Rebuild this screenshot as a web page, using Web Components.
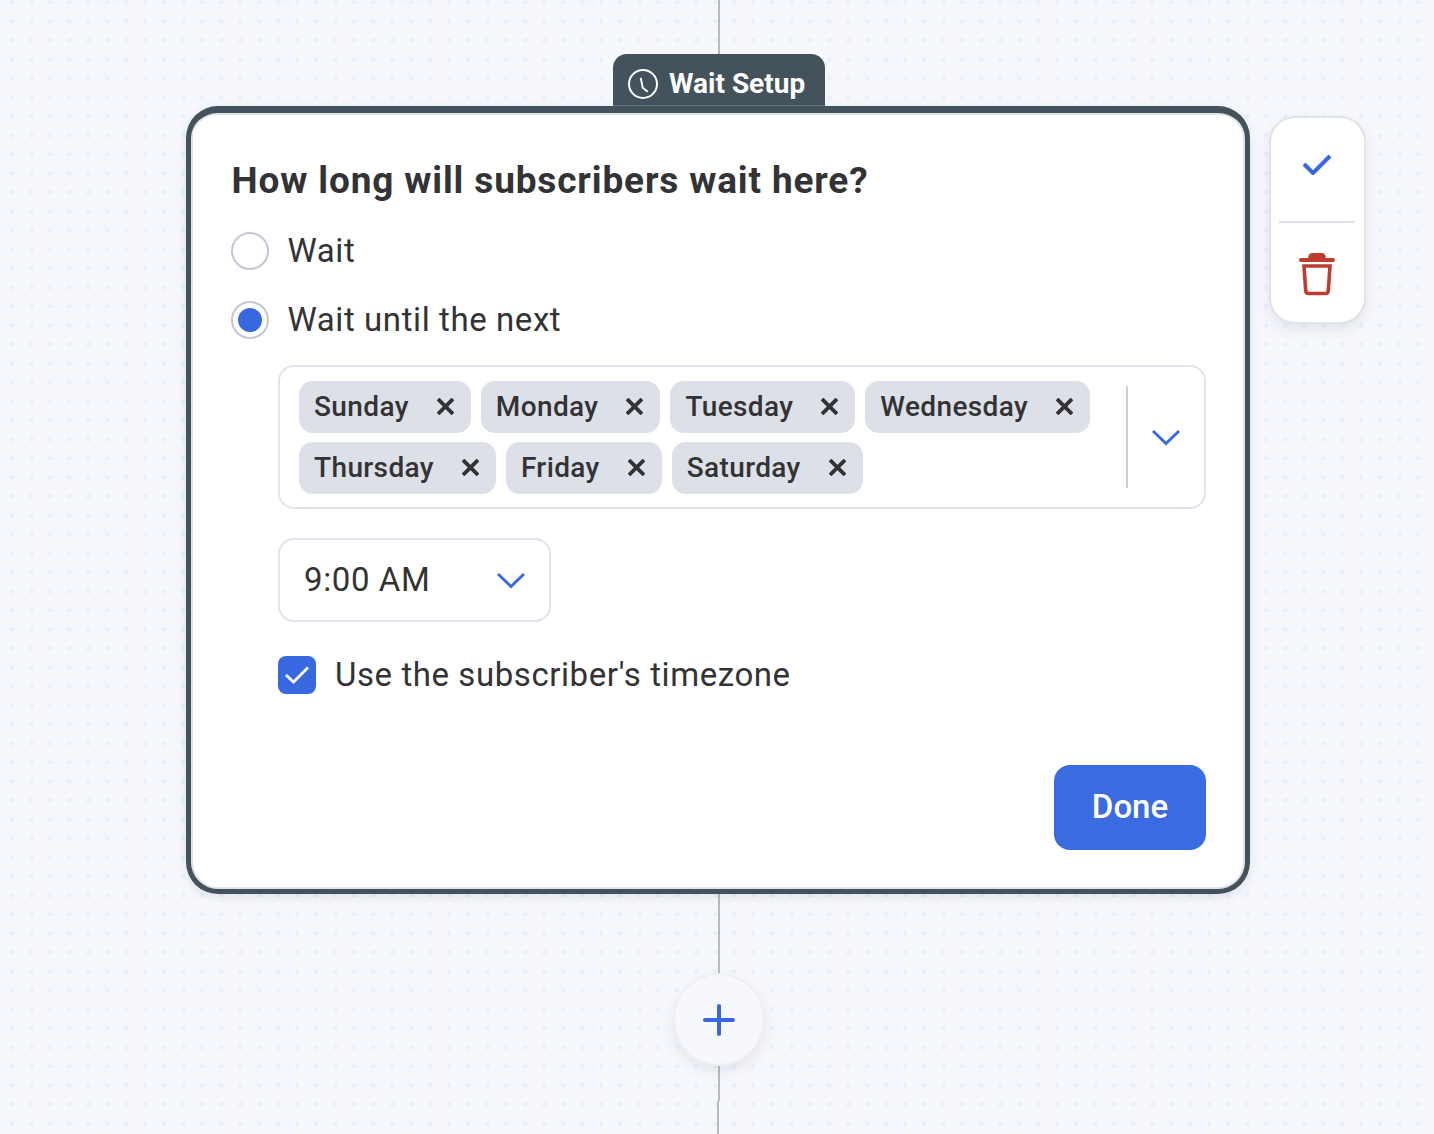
<!DOCTYPE html>
<html lang="en"><head><meta charset="utf-8"><title>Wait Setup</title>
<style>
html,body{margin:0;padding:0;background:#f7f8fd}
body{font-family:Roboto,"Liberation Sans",sans-serif;color:#333336}
</style></head><body>
<wf-canvas>
  <wf-line style="--h:54px"></wf-line>
  <wf-node title-text="Wait Setup">
    <h2 slot="heading">How long will subscribers wait here?</h2>
    <wf-radio>Wait</wf-radio>
    <wf-radio checked>Wait until the next</wf-radio>
    <wf-nested>
      <wf-multiselect>
        <wf-chip>Sunday</wf-chip><wf-chip>Monday</wf-chip><wf-chip>Tuesday</wf-chip><wf-chip>Wednesday</wf-chip>
        <wf-chip>Thursday</wf-chip><wf-chip>Friday</wf-chip><wf-chip>Saturday</wf-chip>
      </wf-multiselect>
      <wf-select>9:00 AM</wf-select>
      <wf-checkbox>Use the subscriber's timezone</wf-checkbox>
    </wf-nested>
    <wf-button slot="footer">Done</wf-button>
  </wf-node>
  <wf-line style="--h:79px"></wf-line>
  <wf-add></wf-add>
  <wf-line style="--h:35px"></wf-line>
  <wf-line style="--h:33px;--x:0px"></wf-line>
</wf-canvas>
<script>
const CHEV='<svg width="30" height="18" viewBox="0 0 30 18" fill="none"><path d="M2 3L15 15.500L28 3" stroke="#3868e0" stroke-width="2.900"/></svg>';
function def(name,html,init){
  customElements.define(name,class extends HTMLElement{
    constructor(){super();this.attachShadow({mode:'open'}).innerHTML=html;}
    connectedCallback(){if(init)init(this);}
  });
}
def('wf-canvas',`<style>:host{display:flex;flex-direction:column;align-items:center;box-sizing:border-box;padding-left:2px;width:1434px;height:1134px;overflow:hidden;background-color:#f7f8fd;background-image:radial-gradient(circle,#e9eefc 1.400px,transparent 2.900px);background-size:19px 19px;background-position:2.800px -7.200px}</style><slot></slot>`);
def('wf-line',`<style>:host{display:block;width:2px;height:var(--h);background:#b9babd;flex:none;margin-left:var(--x,2px)}</style>`);
def('wf-node',`<style>
:host{display:flex;flex-direction:column;align-items:center;position:relative;flex:none;width:1064px}
.tag{height:52px;width:212px;margin-left:2px;box-sizing:border-box;background:#44525c;border-bottom:1px solid #65727b;border-radius:14px 14px 0 0;color:#fff;display:flex;align-items:center;gap:10px;padding:8px 0 0 14px;font:700 28px/36px Roboto,sans-serif;letter-spacing:0;white-space:nowrap}
.card{box-sizing:border-box;width:1064px;height:788px;background:#fff;border:5px solid #44525c;border-top-width:7px;border-radius:32px;box-shadow:inset 0 0 0 2px #e1e3ea,0 3px 12px rgba(60,70,90,.12);padding:46px 39px 39px 40px;display:flex;flex-direction:column}
.body{flex:1;display:flex;flex-direction:column}
.foot{display:flex;justify-content:flex-end}
.tools{position:absolute;left:1082.500px;top:62px;width:97px;height:208px;box-sizing:border-box;background:#fff;border:2px solid #e0e3ea;border-radius:26px;box-shadow:0 6px 14px rgba(60,70,90,.1);display:flex;flex-direction:column;align-items:center}
.tools div{display:flex;justify-content:center;width:100%;box-sizing:border-box}
.tools .a{height:103px;align-items:center;padding-bottom:10px}
.tools .b{flex:1;align-items:center;padding-top:4px}
.tools hr{flex:none;width:76px;height:2px;margin:0;border:0;background:#dfe2ea}
</style>
<div class="tag"><svg width="32" height="32" viewBox="0 0 32 32" fill="none" stroke="#fff" stroke-width="2"><circle cx="16" cy="16" r="14"/><path d="M13.700 9.700L15.700 19.700L20.700 23.700" stroke-width="1.800"/></svg><span id="t"></span></div>
<div class="card"><slot name="heading"></slot><div class="body"><slot></slot></div><div class="foot"><slot name="footer"></slot></div></div>
<div class="tools">
<div class="a"><svg width="32" height="24" viewBox="0 0 32 24" fill="none"><path d="M3 11L12 20L29 3" stroke="#3868e0" stroke-width="4" stroke-linejoin="round"/></svg></div>
<hr>
<div class="b"><svg width="36" height="44" viewBox="0 0 36 44" fill="none"><path d="M9 7C9 2 10.500 0 13 0H23C25.500 0 27 2 27 7Z" fill="#bf3c31"/><path d="M2 7H34" stroke="#bf3c31" stroke-width="4" stroke-linecap="round"/><path d="M5 13H31L29.300 37.500Q29 40.500 26.500 40.500H9.500Q7 40.500 6.700 37.500Z" stroke="#bf3c31" stroke-width="3.600"/></svg></div>
</div>`,el=>{el.shadowRoot.getElementById('t').textContent=el.getAttribute('title-text');
  const h=el.querySelector('h2');h.style.cssText='margin:0 0 29px .5px;font:700 37px/44px Roboto,sans-serif;letter-spacing:.85px;color:#333336';});
def('wf-radio',`<style>:host{display:flex;align-items:center;gap:18.500px;height:38px;margin-bottom:31px;font:400 33px/38px Roboto,sans-serif;letter-spacing:.58px;color:#333336}
.r{width:38px;height:38px;box-sizing:border-box;border:2.500px solid #c3c8d8;border-radius:50%;background:#fff;display:flex;align-items:center;justify-content:center;flex:none}
.r i{display:none;width:24px;height:24px;border-radius:50%;background:#3868e0}
:host([checked]) .r i{display:block}</style><span class="r"><i></i></span><span><slot></slot></span>`);
def('wf-nested',`<style>:host{display:flex;flex-direction:column;align-items:flex-start;margin-left:47px;margin-top:-5px}</style><slot></slot>`);
def('wf-multiselect',`<style>:host{display:flex;box-sizing:border-box;width:928px;height:144px;border:2.500px solid #e1e4ec;border-radius:16px;background:#fff;margin-bottom:29px;position:relative}
.v{flex:1;display:flex;flex-wrap:wrap;gap:9.500px 10px;align-content:flex-start;padding:14px 0 0 19px}
.d{flex:none;width:2px;height:102px;margin:18.500px 0 0;background:#cfcfcf}
.c{flex:none;width:76px;display:flex;align-items:center;justify-content:center}
</style><div class="v"><slot></slot></div><div class="d"></div><div class="c">${CHEV}</div>`);
def('wf-chip',`<style>:host{display:inline-flex;align-items:center;height:51.500px;box-sizing:border-box;padding:0 17px 0 15px;gap:28px;border-radius:14px;background:#dde0e7;font:500 28px/36px Roboto,sans-serif;letter-spacing:.38px;color:#333336;white-space:nowrap}
svg{flex:none}</style><span><slot></slot></span><svg width="17" height="17" viewBox="0 0 17 17" fill="none"><path d="M1 1L16 16M16 1L1 16" stroke="#333336" stroke-width="3.800"/></svg>`);
def('wf-select',`<style>:host{display:flex;align-items:center;justify-content:space-between;box-sizing:border-box;width:273px;height:84px;border:2.500px solid #e1e4ec;border-radius:16px;background:#fff;padding:0 23px 0 24px;margin-bottom:34px;font:400 33px/38px Roboto,sans-serif;letter-spacing:.6px;color:#333336}</style><span><slot></slot></span>${CHEV}`);
def('wf-checkbox',`<style>:host{display:flex;align-items:center;gap:19px;height:38px;font:400 33px/38px Roboto,sans-serif;letter-spacing:.57px;color:#333336}
.b{width:38px;height:38px;border-radius:8px;background:#3868e0;display:flex;align-items:center;justify-content:center;flex:none}</style><span class="b"><svg width="26" height="20" viewBox="0 0 26 20" fill="none"><path d="M2 10L9.500 17L24 2.500" stroke="#fff" stroke-width="2.800"/></svg></span><span><slot></slot></span>`);
def('wf-button',`<style>:host{display:flex;align-items:center;justify-content:center;box-sizing:border-box;width:152px;height:85px;padding-bottom:2px;background:#3a6be0;border-radius:16px;color:#fff;font:500 33px/38px Roboto,sans-serif;letter-spacing:0}</style><slot></slot>`);
def('wf-add',`<style>:host{display:flex;align-items:center;justify-content:center;width:92px;height:93px;margin-left:2px;flex:none;box-sizing:border-box;border-radius:50%;background:#f7f8fd;border:2px solid #eeeff3;box-shadow:0 6px 14px rgba(60,70,90,.1);position:relative}</style><svg width="32" height="32" viewBox="0 0 32 32" fill="none"><path d="M16 2V30M2 16H30" stroke="#3868e0" stroke-width="4" stroke-linecap="round"/></svg>`);
</script>
</body></html>
